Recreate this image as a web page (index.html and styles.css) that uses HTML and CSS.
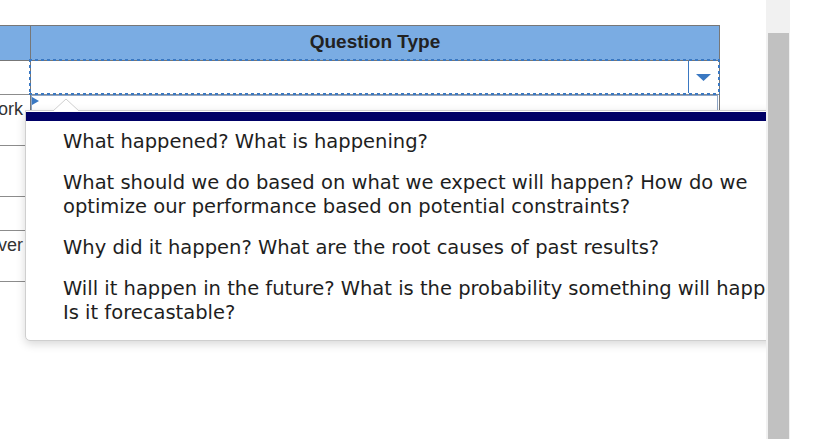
FILE: index.html
```html
<!DOCTYPE html>
<html lang="en">
<head>
  <meta charset="UTF-8">
  <title>Question Type</title>
  <link rel="stylesheet" href="styles.css">
</head>
<body>
  <div class="screen">
    <div class="viewport">
      <div class="grid">
        <div class="row head">
          <div class="cell name"></div>
          <div class="cell type">Question Type</div>
        </div>
        <div class="row r-short">
          <div class="cell name"></div>
          <div class="cell type">
            <div class="combo focused">
              <span class="combo-value"></span>
              <span class="combo-btn">
                <svg width="15" height="7" viewBox="0 0 15 7"><polygon points="0,0 15,0 7.5,7" fill="#3a78c2"/></svg>
              </span>
            </div>
          </div>
        </div>
        <div class="row r-tall">
          <div class="cell name">Network</div>
          <div class="cell type">
            <div class="field"><span class="marker"></span></div>
          </div>
        </div>
        <div class="row r-tall">
          <div class="cell name"></div>
          <div class="cell type"></div>
        </div>
        <div class="row r-short">
          <div class="cell name"></div>
          <div class="cell type"></div>
        </div>
        <div class="row r-tall">
          <div class="cell name">Server</div>
          <div class="cell type"></div>
        </div>
      </div>

      <div class="popup">
        <svg class="caret" width="26" height="13" viewBox="0 0 26 13"><polyline points="0,13 13,1 26,13" fill="#fff" stroke="#cfcfcf"/></svg>
        <div class="popup-bar"></div>
        <ul class="options">
          <li>What happened? What is happening?</li>
          <li>What should we do based on what we expect will happen? How do we optimize our performance based on potential constraints?</li>
          <li>Why did it happen? What are the root causes of past results?</li>
          <li>Will it happen in the future? What is the probability something will happen? Is it forecastable?</li>
        </ul>
      </div>
    </div>
    <div class="scrollbar"><div class="thumb"></div></div>
  </div>
</body>
</html>
```

FILE: styles.css
```css
body {
  margin: 0;
  background: #fff;
  font-family: 'Liberation Sans', Arial, sans-serif;
}
.screen {
  display: flex;
  width: 790px;
  height: 439px;
}
.viewport {
  position: relative;
  width: 766px;
  height: 439px;
  overflow: hidden;
}

/* table */
.grid {
  margin: 25px 0 0 -130px;
  width: 850px;
}
.row {
  display: flex;
}
.cell {
  box-sizing: border-box;
  border-bottom: 1px solid #8c8c8c;
}
.cell.name {
  width: 161px;
  border-right: 1px solid #777;
  padding: 4px 7px 0 0;
  text-align: right;
  font-size: 18px;
  line-height: 20px;
  color: #333;
}
.cell.type {
  width: 689px;
  border-right: 1px solid #777;
  padding: 0;
}
.head .cell {
  height: 36px;
  border-top: 1px solid #777;
  border-bottom: 1px solid #777;
  background: #7aace3;
}
.head .cell.type {
  text-align: center;
  font-weight: bold;
  font-size: 19px;
  line-height: 31px;
  color: #222;
}
.r-short .cell { height: 34px; }
.r-tall .cell { height: 51px; }

/* dropdown */
.combo {
  position: relative;
  display: flex;
  height: 32px;
  margin-right: 1px;
  background: #fff;
}
.combo.focused::after {
  content: '';
  position: absolute;
  top: -2px;
  left: -2px;
  right: -2px;
  bottom: -2px;
  pointer-events: none;
  background:
    repeating-linear-gradient(90deg, #3a78c2 0 3px, transparent 3px 6px) top / 100% 2px no-repeat,
    repeating-linear-gradient(90deg, #3a78c2 0 3px, transparent 3px 6px) bottom / 100% 2px no-repeat,
    repeating-linear-gradient(180deg, #3a78c2 0 3px, transparent 3px 6px) left / 2px 100% no-repeat,
    repeating-linear-gradient(180deg, #3a78c2 0 3px, transparent 3px 6px) right / 2px 100% no-repeat;
}
.combo-value {
  flex: 1;
}
.combo-btn {
  display: flex;
  align-items: center;
  justify-content: center;
  width: 29px;
  border-left: 1px solid #3a78c2;
}
.field {
  position: relative;
  height: 50px;
  margin-right: 1px;
  box-sizing: border-box;
  border: 1px solid #8fa7c7;
}
.marker {
  position: absolute;
  left: 0;
  top: 1px;
  border-left: 7px solid #3a78c2;
  border-top: 4px solid transparent;
  border-bottom: 4px solid transparent;
}

/* popup list */
.popup {
  position: absolute;
  left: 25px;
  top: 110px;
  width: 831px;
  box-sizing: border-box;
  background: #fff;
  border: 1px solid #cfcfcf;
  border-radius: 0 0 5px 5px;
  box-shadow: 0 3px 10px rgba(0, 0, 0, 0.16);
}
.caret {
  position: absolute;
  left: 27px;
  top: -13px;
  display: block;
}
.popup-bar {
  margin-top: 1px;
  height: 9px;
  background: #000066;
}
.options {
  list-style: none;
  margin: 0;
  padding: 1px 0 6px;
  font-family: 'DejaVu Sans', Verdana, sans-serif;
  font-size: 19.5px;
  line-height: 24px;
  color: #1e1e1e;
}
.options li {
  padding: 8px 37px 9px;
}

/* scrollbar */
.scrollbar {
  width: 24px;
  height: 439px;
  background: #f1f1f1;
}
.thumb {
  margin: 33px 0 0 2px;
  width: 21px;
  height: 406px;
  background: #c1c1c1;
}
```
